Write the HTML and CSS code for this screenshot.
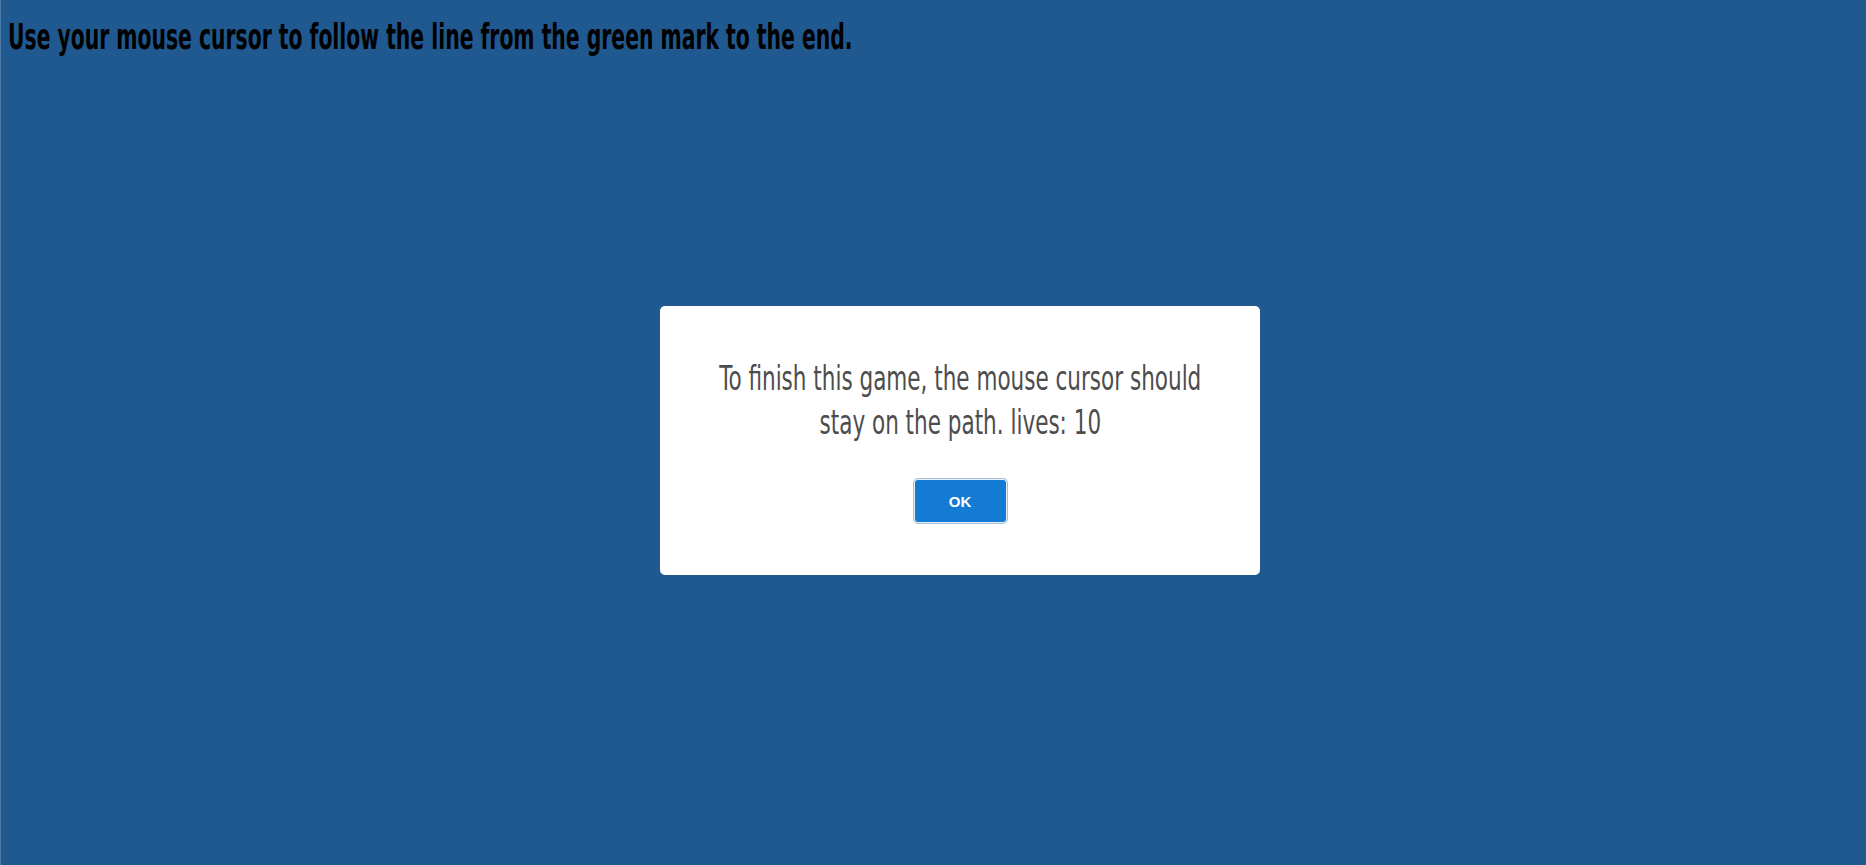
FILE: index.html
```html
<!DOCTYPE html>
<html lang="en">
<head>
<meta charset="utf-8">
<title>Follow the line</title>
<link rel="stylesheet" href="styles.css">
</head>
<body>
<div class="page">
  <h1 class="instructions">Use your mouse cursor to follow the line from the green mark to the end.</h1>
</div>
<div class="overlay">
  <div class="dialog" role="dialog">
    <p class="dialog-text"><span class="line">To finish this game, the mouse cursor should</span> <span class="line">stay on the path. lives: 10</span></p>
    <div class="dialog-actions">
      <button class="btn-ok" type="button">OK</button>
    </div>
  </div>
</div>
</body>
</html>
```

FILE: styles.css
```css
html, body {
  margin: 0;
  padding: 0;
  height: 100%;
}
body {
  background: #20598f;
  overflow: hidden;
}
.page {
  height: 100%;
  border-left: 1px solid #4f7ca6;
  box-sizing: border-box;
  padding: 15px 0 0 7px;
}
.instructions {
  display: inline-block;
  margin: 0;
  font-family: "DejaVu Sans Condensed", "DejaVu Sans", sans-serif;
  font-weight: bold;
  font-size: 35px;
  line-height: 44px;
  color: #000;
  white-space: nowrap;
  transform: scaleX(0.646);
  transform-origin: 0 0;
}
.overlay {
  position: fixed;
  inset: 0;
}
.dialog {
  position: absolute;
  left: 660px;
  top: 306px;
  width: 600px;
  height: 269px;
  box-sizing: border-box;
  background: #fff;
  border-radius: 5px;
  padding: 50px 0 0;
  display: flex;
  flex-direction: column;
  align-items: center;
}
.dialog-text {
  margin: 0;
  font-family: "DejaVu Sans Condensed", "DejaVu Sans", sans-serif;
  font-size: 34px;
  line-height: 44px;
  color: #4d4d4d;
  text-align: center;
  white-space: nowrap;
  transform: scaleX(0.704);
  transform-origin: 50% 0;
}
.dialog-text .line {
  display: block;
}
.dialog-actions {
  margin-top: 36px;
}
.btn-ok {
  display: block;
  width: 91px;
  height: 42px;
  border: 0;
  border-radius: 3px;
  background: #137bd3;
  color: #fff;
  font-family: "Liberation Sans", Arial, sans-serif;
  font-weight: bold;
  font-size: 15px;
  box-shadow: 0 0 0 1px #e8eff6, 0 0 0 2px #a3c0dc;
  cursor: pointer;
}
```
